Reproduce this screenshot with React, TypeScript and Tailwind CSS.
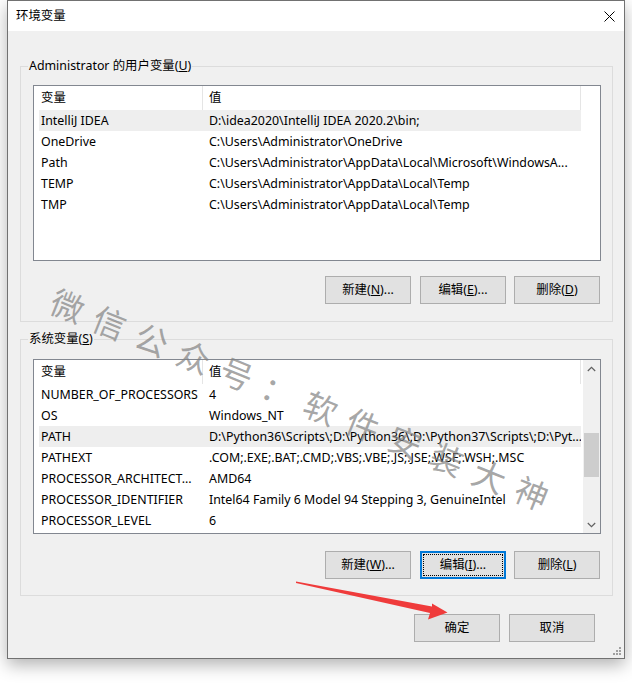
import type { ReactNode } from "react";

type Row = { name: string; value: string; selected?: boolean };

const userVars: Row[] = [
  { name: "IntelliJ IDEA", value: "D:\\idea2020\\IntelliJ IDEA 2020.2\\bin;", selected: true },
  { name: "OneDrive", value: "C:\\Users\\Administrator\\OneDrive" },
  { name: "Path", value: "C:\\Users\\Administrator\\AppData\\Local\\Microsoft\\WindowsA..." },
  { name: "TEMP", value: "C:\\Users\\Administrator\\AppData\\Local\\Temp" },
  { name: "TMP", value: "C:\\Users\\Administrator\\AppData\\Local\\Temp" },
];

const systemVars: Row[] = [
  { name: "NUMBER_OF_PROCESSORS", value: "4" },
  { name: "OS", value: "Windows_NT" },
  {
    name: "PATH",
    value: "D:\\Python36\\Scripts\\;D:\\Python36\\;D:\\Python37\\Scripts\\;D:\\Pyt...",
    selected: true,
  },
  { name: "PATHEXT", value: ".COM;.EXE;.BAT;.CMD;.VBS;.VBE;.JS;.JSE;.WSF;.WSH;.MSC" },
  { name: "PROCESSOR_ARCHITECT...", value: "AMD64" },
  { name: "PROCESSOR_IDENTIFIER", value: "Intel64 Family 6 Model 94 Stepping 3, GenuineIntel" },
  { name: "PROCESSOR_LEVEL", value: "6" },
];

export default function App() {
  return (
    <div className="relative h-[685px] w-[632px] overflow-hidden bg-white font-['Noto_Sans','Noto_Sans_CJK_SC',sans-serif] text-[12.4px] text-black">
      <div className="relative ml-[7px] flex h-[659px] w-[618px] flex-col border border-[#717171] bg-[#f0f0f0] shadow-[0_6px_16px_rgba(0,0,0,0.3)]">
        {/* title bar */}
        <div className="flex h-[30px] items-center justify-between bg-white pl-[8px] pr-[9px]">
          <span className="leading-none">环境变量</span>
          <svg width="11" height="11" viewBox="0 0 11 11" className="text-black">
            <path d="M0.5 0.5 L10.5 10.5 M10.5 0.5 L0.5 10.5" stroke="currentColor" strokeWidth="1" />
          </svg>
        </div>

        <div className="flex flex-1 flex-col pl-[12px] pr-[11px] pt-[35px]">
          <Group
            label={
              <>
                Administrator 的用户变量(<u>U</u>)
              </>
            }
            className="h-[256px] pt-[18px]"
          >
            <ListView rows={userVars} height="h-[176px]" />
            <div className="mt-[15px] flex justify-end gap-[8px] pr-[1px]">
              <Button className="mr-[1px]">
                新建(<u>N</u>)...
              </Button>
              <Button>
                编辑(<u>E</u>)...
              </Button>
              <Button>
                删除(<u>D</u>)
              </Button>
            </div>
          </Group>

          <Group
            label={
              <>
                系统变量(<u>S</u>)
              </>
            }
            className="mt-[17px] h-[257px] pt-[19px]"
          >
            <ListView rows={systemVars} height="h-[175px]" scroll />
            <div className="mt-[17px] flex justify-end gap-[8px] pr-[1px]">
              <Button className="mr-[1px]">
                新建(<u>W</u>)...
              </Button>
              <Button focused>
                编辑(<u>I</u>)...
              </Button>
              <Button>
                删除(<u>L</u>)
              </Button>
            </div>
          </Group>

          <div className="mt-[18px] flex justify-end gap-[9px] pr-[18px]">
            <Button>确定</Button>
            <Button>取消</Button>
          </div>
        </div>

        {/* size grip */}
        <svg width="9" height="9" viewBox="0 0 9 9" className="absolute bottom-[2px] right-[2px] fill-[#a0a0a0]">
          <rect x="6" y="0" width="2" height="2" />
          <rect x="3" y="3" width="2" height="2" />
          <rect x="6" y="3" width="2" height="2" />
          <rect x="0" y="6" width="2" height="2" />
          <rect x="3" y="6" width="2" height="2" />
          <rect x="6" y="6" width="2" height="2" />
        </svg>
      </div>

      {/* watermark */}
      <div className="pointer-events-none absolute left-[300px] top-[399px] -translate-x-1/2 -translate-y-1/2 rotate-[22deg] whitespace-nowrap pl-[12px] font-['Noto_Sans_CJK_SC',sans-serif] text-[33px] leading-none tracking-[12.5px] text-[#808080]/70">
        微信公众号：软件安装大神
      </div>

      {/* red arrow */}
      <svg className="pointer-events-none absolute left-0 top-0" width="632" height="685" viewBox="0 0 632 685">
        <polygon
          points="296,581.5 432,606.5 432,603.5 447.5,612.5 428,619.5 430,613 296,583"
          fill="#ef3b3b"
        />
      </svg>
    </div>
  );
}

function Group({
  label,
  className,
  children,
}: {
  label: ReactNode;
  className?: string;
  children: ReactNode;
}) {
  return (
    <div className={`relative border border-[#dcdcdc] pl-[12px] pr-[11px] ${className ?? ""}`}>
      <span className="absolute left-[7px] top-[-9px] bg-[#f0f0f0] px-[1px] leading-[16px]">{label}</span>
      {children}
    </div>
  );
}

function ListView({ rows, height, scroll }: { rows: Row[]; height: string; scroll?: boolean }) {
  return (
    <div className={`flex border border-[#828790] bg-white ${height}`}>
      <div className="min-w-0 flex-1 overflow-hidden pl-[5px]">
        <div className="flex h-[24px]">
          <div className="flex w-[164px] items-center border-r border-[#e5e5e5] pl-[2px] pt-[1px]">变量</div>
          <div className="flex w-[378px] items-center border-r border-[#e5e5e5] pl-[6px] pt-[1px]">值</div>
        </div>
        {rows.map((r) => (
          <div
            key={r.name}
            className={`flex h-[21px] w-[542px] items-center whitespace-nowrap pt-[1px] ${r.selected ? "bg-[#eeeeee]" : ""}`}
          >
            <div className="w-[164px] overflow-hidden pl-[2px]">{r.name}</div>
            <div className="w-[378px] overflow-hidden pl-[6px]">{r.value}</div>
          </div>
        ))}
      </div>
      {scroll && <ScrollBar />}
    </div>
  );
}

function ScrollBar() {
  return (
    <div className="flex w-[17px] flex-col bg-[#f0f0f0]">
      <div className="flex h-[17px] items-center justify-center">
        <svg width="9" height="6" viewBox="0 0 9 6">
          <path d="M0.8 5 L4.5 1.3 L8.2 5" fill="none" stroke="#606060" strokeWidth="1.2" />
        </svg>
      </div>
      <div className="flex-1 pt-[56px]">
        <div className="mx-[1px] h-[44px] bg-[#cdcdcd]" />
      </div>
      <div className="flex h-[17px] items-center justify-center">
        <svg width="9" height="6" viewBox="0 0 9 6">
          <path d="M0.8 1 L4.5 4.7 L8.2 1" fill="none" stroke="#606060" strokeWidth="1.2" />
        </svg>
      </div>
    </div>
  );
}

function Button({
  children,
  focused,
  className,
}: {
  children: ReactNode;
  focused?: boolean;
  className?: string;
}) {
  if (focused) {
    return (
      <div
        className={`flex h-[28px] w-[86px] items-center justify-center border-2 border-[#0078d7] bg-[#e1e1e1] p-[1px] ${className ?? ""}`}
      >
        <div className="flex h-full w-full items-center justify-center border border-dotted border-black leading-none">
          {children}
        </div>
      </div>
    );
  }
  return (
    <div
      className={`flex h-[28px] w-[86px] items-center justify-center border border-[#adadad] bg-[#e1e1e1] leading-none ${className ?? ""}`}
    >
      {children}
    </div>
  );
}
